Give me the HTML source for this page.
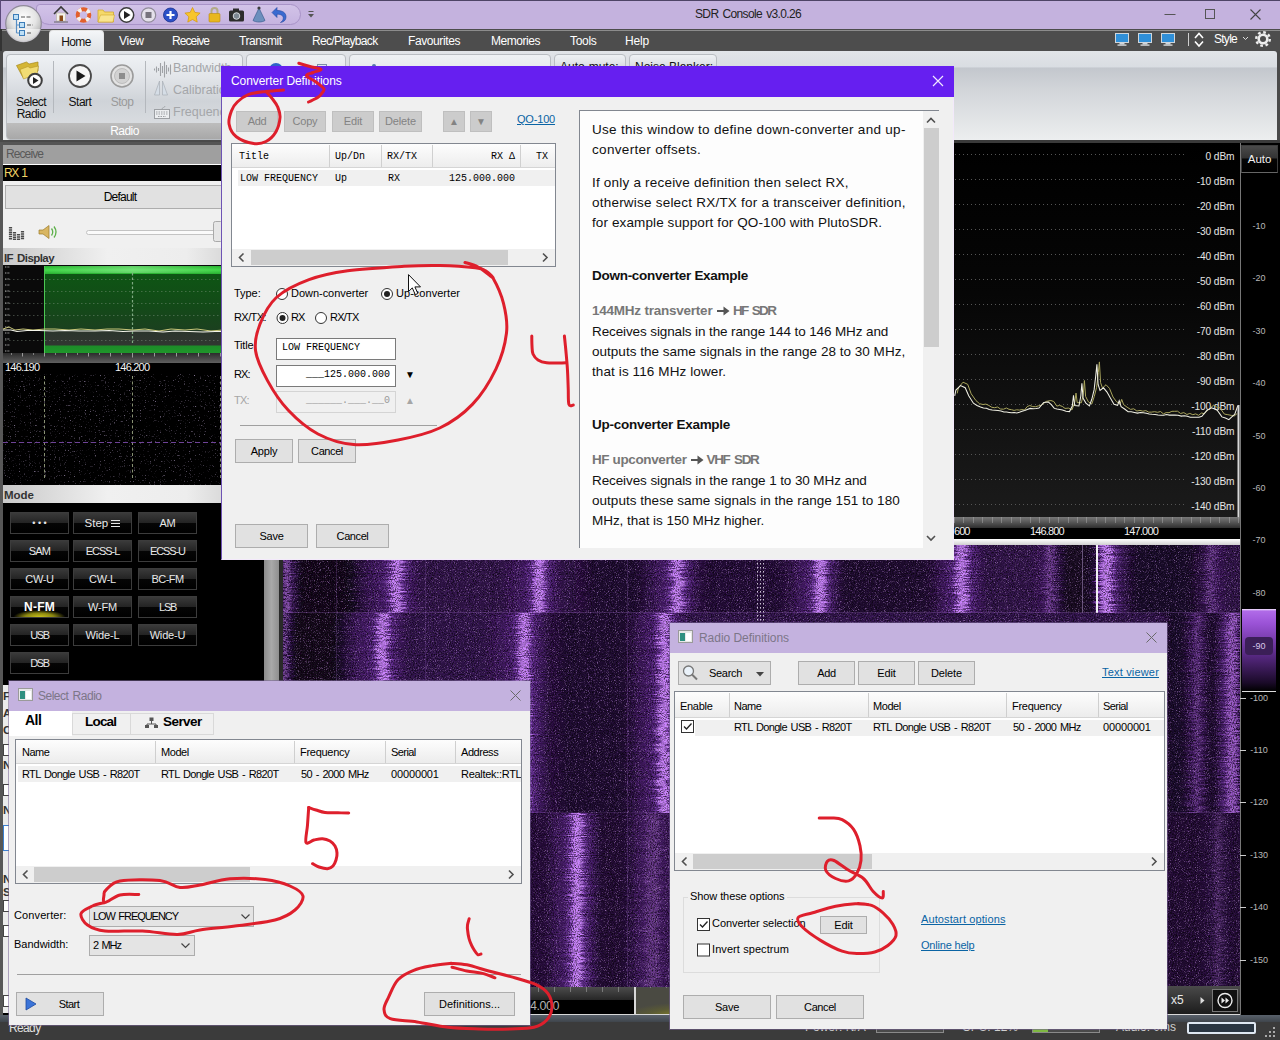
<!DOCTYPE html>
<html>
<head>
<meta charset="utf-8">
<title>SDR Console v3.0.26</title>
<style>
*{box-sizing:border-box;margin:0;padding:0}
html,body{width:1280px;height:1040px;overflow:hidden;background:#000}
body{font-family:"Liberation Sans",sans-serif;font-size:11px;color:#000;position:relative}
.abs{position:absolute}
#app{position:absolute;left:0;top:0;width:1280px;height:1040px;overflow:hidden;background:#4a4a4a}
/* ---------- title bar ---------- */
#titlebar{left:0;top:0;width:1280px;height:29px;background:#c4b2de}
#titlebar .ttl{left:648px;top:7px;width:200px;text-align:center;font-size:12.5px;color:#222}
#menubar{left:0;top:29px;width:1280px;height:22px;background:#4d4d4d}
.menu{position:absolute;top:6px;font-size:12px;color:#fff;letter-spacing:.1px}
#hometab{left:49px;top:30px;width:55px;height:21px;background:linear-gradient(#f4f6f8,#dfe3e7);border-radius:4px 4px 0 0;border:1px solid #e6e6e6;border-bottom:0}
#ribbon{left:3px;top:51px;width:1274px;height:89px;background:linear-gradient(#e1e4e8 0,#d9dde2 18%,#c3c7cd 19%,#d3d6da 45%,#eceeef 100%);border-radius:3px 3px 0 0}
.rgroup{position:absolute;top:3px;height:86px;border:1px solid #b9bdc2;border-radius:4px;background:linear-gradient(#eef1f4 0,#e3e6ea 25%,#cfd3d8 55%,#dfe2e5 100%);overflow:hidden}
.rglabel{position:absolute;left:0;right:0;bottom:0;height:16px;background:linear-gradient(#bdbdbd,#a8a8a8);color:#fff;font-size:12px;text-align:center;line-height:16px}
.rbtxt{position:absolute;font-size:12px;text-align:center;color:#111;line-height:13px}
/* ---------- left panel ---------- */
#left{left:0;top:142px;width:283px;height:878px;background:#000}
.phead{position:absolute;left:3px;height:17px;background:linear-gradient(90deg,#c9c9c9 0,#f0f0f0 40%,#ededed 70%,#c4c4c4 100%);color:#333;font-weight:bold;font-size:11.5px;line-height:17px;padding-left:1px}
.mbtn{position:absolute;width:59px;height:22px;border:1px solid #3c3c3c;background:linear-gradient(#3a3a3a 0,#242424 48%,#050505 52%,#000 100%);color:#e8e8e8;font-size:11.5px;text-align:center;line-height:20px}
/* ---------- dialogs ---------- */
.dlg{position:absolute;background:#f0f0f0}
.wbtn{position:absolute;border:1px solid #adadad;background:#e1e1e1;font-size:11.5px;text-align:center;color:#000}
.wbtn.dis{background:#cccccc;border-color:#bfbfbf;color:#838383}
.lst{position:absolute;background:#fff;border:1px solid #828790}
.lh{position:absolute;top:0;height:22px;border-right:1px solid #d0d0d0;font-size:11.5px;padding-left:5px;line-height:22px;background:linear-gradient(#fff,#f2f2f2)}
.lnk{position:absolute;color:#0a64a4;text-decoration:underline;font-size:11.5px}
.mono{font-family:"Liberation Mono",monospace}
.t{position:absolute;white-space:nowrap}
.hp{position:absolute;left:12px;white-space:nowrap;font-size:13.500px;line-height:20px;color:#111}
.hp.b{font-weight:bold}
.hp.g{font-weight:bold;color:#777}
</style>
</head>
<body>
<div id="app">

<!-- TITLE BAR -->
<div id="titlebar" class="abs">
  <div class="abs" style="left:0;top:0;width:1280px;height:1px;background:#4e4466"></div>
  <div class="abs" style="left:0;top:0;width:1px;height:30px;background:#5a4a78"></div>
  <!-- quick access toolbar pill -->
  <div class="abs" style="left:36px;top:4px;width:265px;height:21px;border:1px solid #a893c7;border-radius:4px 11px 11px 14px;background:linear-gradient(#d2c3e8,#c6b4e0)"></div>
  <div class="ttl abs" style="font-size:12px;letter-spacing:-0.642px;word-spacing:1.4px">SDR Console v3.0.26</div>
  <!-- window controls -->
  <svg class="abs" style="left:1150px;top:0" width="130" height="30" viewBox="0 0 130 30">
    <path d="M14.5 14.5h11" stroke="#555" stroke-width="1" fill="none"/>
    <rect x="55.5" y="9.5" width="9" height="9" stroke="#555" stroke-width="1" fill="none"/>
    <path d="M100.500 9.500l10 10M110.500 9.500l-10 10" stroke="#444" stroke-width="1.1" fill="none"/>
  </svg>
  <!-- QAT icons -->
  <svg class="abs" style="left:48px;top:3px" width="280" height="24" viewBox="0 0 280 24">
    <!-- house -->
    <path d="M6 11 L13 4 L20 11" stroke="#3a3a3a" stroke-width="1.6" fill="none"/>
    <rect x="8.500" y="10" width="9" height="8" fill="#f3f1ea" stroke="#b9b3a0" stroke-width=".6"/>
    <rect x="11.500" y="12.500" width="3.500" height="5.500" fill="#8b4a18"/>
    <path d="M6 19h14" stroke="#666" stroke-width="1"/>
    <!-- lifebuoy -->
    <circle cx="35.500" cy="12" r="5.800" fill="none" stroke="#e2602c" stroke-width="4"/>
    <circle cx="35.500" cy="12" r="5.800" fill="none" stroke="#f4f1ee" stroke-width="4" stroke-dasharray="3.500 5.610" stroke-dashoffset="-2.800"/>
    <!-- folder -->
    <path d="M50 7h5l1.500 2h9v10h-15.500z" fill="#f5d86a" stroke="#d2a92e" stroke-width=".8"/>
    <path d="M50 19l2.500 -7h14l-1.500 7z" fill="#f9e48f" stroke="#d2a92e" stroke-width=".6"/>
    <!-- play -->
    <circle cx="78.500" cy="12" r="7.200" fill="#fff" stroke="#3b3b3b" stroke-width="1.500"/>
    <path d="M76 8l6.500 4l-6.500 4z" fill="#222"/>
    <!-- stop -->
    <circle cx="100.500" cy="12" r="7.200" fill="#e4e0ea" stroke="#8f8a98" stroke-width="1.200"/>
    <rect x="97.500" y="9" width="6" height="6" fill="#77737d"/>
    <!-- blue plus -->
    <circle cx="122.500" cy="12" r="7" fill="#2b50c8" stroke="#1b2f8a" stroke-width=".8"/>
    <path d="M122.500 8v8M118.500 12h8" stroke="#fff" stroke-width="2.200"/>
    <!-- star -->
    <path d="M144.500 4.500l2.300 4.900 5.300 .7 -3.900 3.700 1 5.300 -4.700 -2.600 -4.700 2.600 1 -5.300 -3.900 -3.700 5.300 -.7z" fill="#f7c52c" stroke="#d79a13" stroke-width=".8"/>
    <!-- lock -->
    <path d="M163.500 11v-3a3 3 0 0 1 6 0v3" stroke="#b3ab86" stroke-width="2" fill="none"/>
    <rect x="161" y="10.500" width="11" height="8.500" rx="1" fill="#e8b720" stroke="#b88a10" stroke-width=".6"/>
    <!-- camera -->
    <rect x="181" y="7.500" width="15" height="11" rx="1.500" fill="#2c2c2c"/>
    <rect x="185" y="5.500" width="6" height="3" fill="#2c2c2c"/>
    <circle cx="188.500" cy="13" r="3.300" fill="#7d8892" stroke="#d5d8dc" stroke-width="1"/>
    <!-- cone -->
    <path d="M211 5l6 12.500c-3 2-9 2-12 0z" fill="#6c8fbd" stroke="#3d5f90" stroke-width=".7"/>
    <circle cx="211" cy="5" r="1.600" fill="#3d3d3d"/>
    <!-- undo -->
    <path d="M224 9.500 l5 -5 v3 c6 0 9 2.500 9 6.500 c0 3 -2 5 -5.500 5.500 c2 -1.500 2.800 -2.700 2.800 -4.500 c0 -2.500 -2.500 -3.800 -6.300 -3.800 v3.300z" fill="#3a6ad0" stroke="#2347a0" stroke-width=".6"/>
    <!-- dropdown -->
    <path d="M260.500 8.500h5" stroke="#555" stroke-width="1"/>
    <path d="M260 11h6l-3 3.500z" fill="#555"/>
  </svg>
</div>
  <svg class="abs" style="left:3px;top:3px;z-index:5" width="42" height="42" viewBox="0 0 42 42">
    <defs><radialGradient id="og" cx="50%" cy="35%" r="65%"><stop offset="0" stop-color="#ffffff"/><stop offset=".55" stop-color="#e4e4e4"/><stop offset="1" stop-color="#a9a9a9"/></radialGradient></defs>
    <circle cx="20.500" cy="20.500" r="17.800" fill="url(#og)" stroke="#8f8a99" stroke-width="1.200"/>
    <path d="M3.500 26 a17.500 17.500 0 0 0 34 0z" fill="#fff" opacity=".55"/>
    <path d="M13.500 14v16M13.500 22h6M13.500 30h6" stroke="#5a8fc4" stroke-width="1.200" fill="none"/>
    <rect x="10.500" y="11.500" width="5" height="5" fill="#bfe0f6" stroke="#3d7db8"/>
    <rect x="16.500" y="19.500" width="5" height="5" fill="#bfe0f6" stroke="#3d7db8"/>
    <rect x="16.500" y="27.500" width="5" height="5" fill="#bfe0f6" stroke="#3d7db8"/>
    <path d="M18 14h10M24 22h6M24 30h4" stroke="#555" stroke-width="1" stroke-dasharray="4 1.500"/>
  </svg>
<div id="menubar" class="abs">
  <div class="abs" style="left:0;top:1px;width:1280px;height:1px;background:#8c8c8c"></div>
  <div class="abs" style="left:0;top:0;width:2px;height:22px;background:#333"></div>
</div>
<div id="hometab" class="abs"><div class="abs" style="left:0;width:52px;top:4px;text-align:center;font-size:12px;color:#111;letter-spacing:-0.677px">Home</div></div>
<div class="menu" style="left:119px;top:34px;font-size:12px;letter-spacing:-0.273px">View</div>
<div class="menu" style="left:172px;top:34px;font-size:12px;letter-spacing:-0.908px">Receive</div>
<div class="menu" style="left:239px;top:34px;font-size:12px;letter-spacing:-0.466px">Transmit</div>
<div class="menu" style="left:312px;top:34px;font-size:12px;letter-spacing:-0.655px">Rec/Playback</div>
<div class="menu" style="left:408px;top:34px;font-size:12px;letter-spacing:-0.402px">Favourites</div>
<div class="menu" style="left:491px;top:34px;font-size:12px;letter-spacing:-0.459px">Memories</div>
<div class="menu" style="left:570px;top:34px;font-size:12px;letter-spacing:-0.303px">Tools</div>
<div class="menu" style="left:625px;top:34px;font-size:12px;letter-spacing:-0.170px">Help</div>
<div class="menu" style="left:1214px;top:32px;font-size:12px;letter-spacing:-0.736px">Style</div>
<svg class="abs" style="left:1110px;top:29px" width="170" height="22" viewBox="0 0 170 22">
  <g id="mon"><rect x="5.500" y="4.500" width="13" height="9" fill="#2f8fd8" stroke="#cfd6dc" stroke-width="1"/><rect x="9.500" y="14" width="5" height="1.500" fill="#cfd6dc"/><rect x="7.500" y="15.500" width="9" height="1.200" fill="#e6e9ec"/></g>
  <use href="#mon" x="23"/><use href="#mon" x="46"/>
  <path d="M78.500 4v13" stroke="#cfcfcf" stroke-width="1"/>
  <path d="M85 9l4-4.500 4 4.500M85 12.500l4 4.500 4-4.500" stroke="#fff" stroke-width="1.600" fill="none"/>
  <path d="M133 8l2.500 2.500 2.500-2.500" stroke="#ddd" stroke-width="1" fill="none"/>
  <circle cx="153" cy="10" r="4.300" fill="none" stroke="#eee" stroke-width="2.600"/>
  <circle cx="153" cy="10" r="6.800" fill="none" stroke="#eee" stroke-width="2.400" stroke-dasharray="2.700 2.640"/>
</svg>

<!-- RIBBON -->
<div id="ribbon" class="abs">
  <div class="rgroup" style="left:3px;width:237px">
    <div class="rglabel" style="font-size:12px;letter-spacing:-0.531px">Radio</div>
    <div class="abs" style="left:46px;top:6px;width:1px;height:52px;background:#b4b8bd"></div>
    <div class="abs" style="left:138px;top:6px;width:1px;height:52px;background:#b4b8bd"></div>
    <div class="rbtxt" style="left:1px;top:40.500px;width:46px;letter-spacing:-.55px;line-height:12.500px">Select<br>Radio</div>
    <div class="rbtxt" style="left:52px;top:40.500px;width:42px;font-size:12px;letter-spacing:-0.468px">Start</div>
    <div class="rbtxt" style="left:94px;top:40.500px;width:42px;color:#9a9a9a;font-size:12px;letter-spacing:-0.496px">Stop</div>
    <div class="rbtxt" style="left:166px;top:6.500px;color:#a4a6a9;font-size:12.500px">Bandwidth</div>
    <div class="rbtxt" style="left:166px;top:28.500px;color:#a4a6a9;font-size:12.500px">Calibration</div>
    <div class="rbtxt" style="left:166px;top:50.500px;color:#a4a6a9;font-size:12.500px">Frequency</div>
    <svg class="abs" style="left:0;top:1.500px" width="237" height="68" viewBox="0 0 237 68">
      <!-- select radio: folders + play -->
      <path d="M9.500 8.500l10-3.500 2.500 2 9-2v9l-15 6.500z" fill="#d4b534" stroke="#a88a1c" stroke-width=".7"/>
      <path d="M13 12.500l8-3 2 1.500 8.500-2-1.500 8-13.500 5z" fill="#f1dc74" stroke="#b4952a" stroke-width=".6"/>
      <circle cx="28" cy="23.500" r="6.800" fill="#fdfdfd" stroke="#3f3f3f" stroke-width="2"/>
      <path d="M26 20l5.500 3.500-5.500 3.500z" fill="#222"/>
      <!-- start -->
      <circle cx="73" cy="19" r="11" fill="#f6f6f6" stroke="#4a4a4a" stroke-width="1.800"/>
      <path d="M69.500 13.500l9 5.500-9 5.500z" fill="#1a1a1a"/>
      <!-- stop -->
      <circle cx="115" cy="19" r="11" fill="#e3e3e3" stroke="#9b9b9b" stroke-width="1.600"/>
      <circle cx="115" cy="19" r="7.500" fill="#d2d2d2" stroke="#b5b5b5" stroke-width=".8"/>
      <rect x="112" y="16" width="6" height="6" fill="#8d8d8d"/>
      <!-- bandwidth icon -->
      <path d="M147.500 11.500v2M149.500 9.500v6M151.500 11v3M153.500 6v13M155.500 9v7M157.500 4.500v16M159.500 8v9M161.500 10.500v4M163.500 7.500v10" stroke="#9fa2a6" stroke-width="1.100"/>
      <!-- calibration icon -->
      <path d="M152.500 24l-5 14h5zM155.500 24l5 14h-5z" fill="#d5dde6" stroke="#a9afb6" stroke-width=".7"/>
      <!-- keyboard icon -->
      <rect x="147.500" y="52.500" width="15" height="9" fill="#eceef0" stroke="#9c9fa3" stroke-width="1"/>
      <path d="M149 55h12M149 57h12M151 59.500h8" stroke="#9c9fa3" stroke-width="1" stroke-dasharray="1.500 1"/>
      <path d="M155 52c0-2 3-1 3-3" stroke="#9c9fa3" stroke-width=".8" fill="none"/>
    </svg>
  </div>
  <div class="rgroup" style="left:243px;width:100px"><div class="rglabel"></div><svg class="abs" style="left:0;top:0" width="100" height="30"><circle cx="29" cy="15" r="7" fill="#2f62c8"/><rect x="70.500" y="9.500" width="9" height="8" fill="#dfe6ee" stroke="#7d8fa8"/></svg></div>
  <div class="rgroup" style="left:346px;width:202px"><div class="rglabel"></div><svg class="abs" style="left:0;top:0" width="202" height="30"><circle cx="24" cy="11" r="2" fill="#5577aa"/></svg></div>
  <div class="rgroup" style="left:551px;width:72px;height:30px"><div class="rbtxt" style="left:5px;top:6px;font-size:12px">Auto-mute:</div></div>
  <div class="rgroup" style="left:626px;width:88px;height:30px"><div class="rbtxt" style="left:5px;top:6px;font-size:12px">Noise Blanker:</div></div>
</div>
<div id="left" class="abs">
  <div class="abs" style="left:0;top:0;width:283px;height:3px;background:#555"></div>
  <div class="abs" style="left:0;top:0;width:3px;height:878px;background:#575757"></div>
  <!-- Receive header -->
  <div class="abs" style="left:3px;top:3px;width:262px;height:19px;background:#9f9f9f;color:#595959;font-size:12px;line-height:19px;padding-left:3px;letter-spacing:-0.908px">Receive</div>
  <div class="abs" style="left:3px;top:22px;width:262px;height:1px;background:#fff"></div>
  <div class="abs" style="left:3px;top:23px;width:262px;height:16px;background:#000;color:#f2d467;font-size:12px;line-height:16px;padding-left:1px;letter-spacing:-1.394px;word-spacing:1.4px">RX 1</div>
  <div class="abs" style="left:3px;top:39px;width:262px;height:67px;background:#f0f0f0"></div>
  <div class="wbtn" style="left:5px;top:43px;width:230px;height:24px;font-size:12px;line-height:22px;letter-spacing:-0.760px">Default</div>
  <svg class="abs" style="left:3px;top:76px" width="230" height="28" viewBox="0 0 230 28">
    <path d="M7.500 9v13M11.500 14v8M15.500 16v6M19.500 13v9" stroke="#4a4a4a" stroke-width="3.200" stroke-dasharray="1.500 .7"/>
    <path d="M36 12h4l6-4.500v13l-6-4.500h-4z" fill="#d9b662" stroke="#9b7b2c" stroke-width=".7"/>
    <path d="M48.500 10.500q2.500 3.500 0 7M51 8.500q4 5.500 0 11" stroke="#5db04a" stroke-width="1.300" fill="none"/>
    <rect x="83.500" y="12.500" width="132" height="4" rx="2" fill="#fafafa" stroke="#c3c3c3" stroke-width="1"/>
    <rect x="210.500" y="3.500" width="9" height="20" rx="2" fill="#e6e6e6" stroke="#a9a9a9" stroke-width="1"/>
  </svg>
  <!-- IF display -->
  <div class="phead" style="top:106px;width:262px;line-height:20px;font-size:11.5px;letter-spacing:-0.573px;word-spacing:1.4px">IF Display</div>
  <div class="abs" style="left:3px;top:123px;width:262px;height:88px;background:#0a0a0a"></div>
  <div class="abs" style="left:44px;top:124px;width:177px;height:87px;background:linear-gradient(#27b02f 0,#43d84a 4px,#2cb534 7.500px,#0e5514 8px,#134a18 40px,#1b401f 64px,#2b352c 65px,#313631 79px,#1d8c28 80px,#1f962b 87px);border-left:1px solid #4cc853"></div>
  <div class="abs" style="left:44px;top:124px;width:177px;height:87px;background:linear-gradient(90deg,rgba(255,255,255,0) 0,rgba(200,255,200,.35) 50%,rgba(255,255,255,0) 100%);height:7px"></div>
  <svg class="abs" style="left:3px;top:123px" width="262" height="100" viewBox="0 0 262 100">
    <g stroke="#8fa08f" stroke-width=".8" stroke-dasharray="1.500 2.500" opacity=".5">
      <path d="M2 14.500h216M2 26.500h216M2 38.500h216M2 50.500h216M2 75.500h216"/>
    </g>
    <path d="M129.500 8v72" stroke="#7fa982" stroke-width="1.200" stroke-dasharray="2.500 2"/>
    <g stroke="#bbb" stroke-width=".9"><path d="M2 2h5M2 8h5M2 14h5M2 20h5M2 26h5M2 32h5M2 38h5M2 44h5M2 50h5M2 56h5M2 62h5M2 68h5M2 74h5M2 80h5M2 86h5" stroke-dasharray="1 .6"/></g>
    <path d="M0 64 l6 -2 6 3 8 -1 10 1 12 -1 10 0 14 1 12 -1 14 1 12 -1 12 0 14 1 12 -1 14 2 12 -2 14 1 12 -1 14 2 12 -1 6 0" stroke="#c9c77a" stroke-width="1" fill="none"/>
    <path d="M0 65 l8 0 6 1.500 10 -1 12 0 14 .5 12 -.5 14 .5 16 0 14 -.5 14 1 12 -.5 14 0 14 1 12 -1 14 .5 14 .5 12 -.5 10 0" stroke="#f4f4ea" stroke-width="1.100" fill="none"/>
  </svg>
  <!-- tick bar -->
  <div class="abs" style="left:3px;top:211px;width:262px;height:10px;background:linear-gradient(#2c2c2c,#606060)"></div>
  <svg class="abs" style="left:3px;top:211px" width="220" height="10" viewBox="0 0 220 10">
    <path d="M19.500 0v3.500M41.500 0v3.500M63.500 0v3.500M85.500 0v3.500M107.500 0v3.500M129.500 0v4.500M151.500 0v3.500M173.500 0v3.500M195.500 0v3.500M217.500 0v3.500" stroke="#9a9a9a" stroke-width="1"/>
    <path d="M8.500 0v2M30.500 0v2M52.500 0v2M74.500 0v2M96.500 0v2M118.500 0v2M140.500 0v2M162.500 0v2M184.500 0v2M206.500 0v2" stroke="#808080" stroke-width="1"/>
  </svg>
  <div class="t" style="left:5px;top:219px;color:#f4f4f4;font-size:11px;letter-spacing:-0.794px">146.190</div>
  <div class="t" style="left:115px;top:219px;color:#f4f4f4;font-size:11px;letter-spacing:-0.794px">146.200</div>
  <svg class="abs" style="left:3px;top:232px" width="262" height="111"><filter id="nz3" x="0" y="0" width="100%" height="100%"><feTurbulence type="fractalNoise" baseFrequency="0.800" numOctaves="1" seed="7"/><feColorMatrix type="matrix" values="0 0 0 0 0.620  0 0 0 0 0.480  0 0 0 0 0.780  0 4 0 0 -2.550"/></filter><rect width="262" height="122" filter="url(#nz3)" opacity=".8"/></svg>
  <svg class="abs" style="left:3px;top:232px" width="262" height="112" viewBox="0 0 262 112">
    <path d="M41.500 2v104M129.500 2v104M217.500 2v104" stroke="#a9b58e" stroke-width="1" stroke-dasharray="3 2.500" opacity=".8"/>
    <path d="M0 68.500h218" stroke="#7a4aa8" stroke-width="1" stroke-dasharray="5 3" opacity=".9"/>
  </svg>
  <!-- Mode -->
  <div class="phead" style="top:343px;width:262px;height:18px;line-height:20px;font-size:11.5px;letter-spacing:-0.007px">Mode</div>
  <div class="mbtn" style="left:10px;top:370px;font-size:9px;letter-spacing:0">• • •</div>
<div class="mbtn" style="left:73px;top:370px">Step <svg width="9" height="9" viewBox="0 0 9 9" style="vertical-align:-0.500px"><path d="M0 1.500h9M0 4.500h9M0 7.500h9" stroke="#e8e8e8" stroke-width="1.200"/></svg></div>
<div class="mbtn" style="left:138px;top:370px;font-size:11px;letter-spacing:-0.251px">AM</div>
<div class="mbtn" style="left:10px;top:398px;font-size:11px;letter-spacing:-0.780px">SAM</div>
<div class="mbtn" style="left:73px;top:398px;font-size:11px;letter-spacing:-1.040px">ECSS-L</div>
<div class="mbtn" style="left:138px;top:398px;font-size:11px;letter-spacing:-1.127px">ECSS-U</div>
<div class="mbtn" style="left:10px;top:426px;font-size:11px;letter-spacing:-0.359px">CW-U</div>
<div class="mbtn" style="left:73px;top:426px;font-size:11px;letter-spacing:-0.277px">CW-L</div>
<div class="mbtn" style="left:138px;top:426px;font-size:11px;letter-spacing:-0.566px">BC-FM</div>
<div class="mbtn" style="left:10px;top:454px;font-weight:bold;color:#fff;font-size:12px;background:radial-gradient(ellipse 26px 7px at 50% 100%,#c9c21a 0,#8a8610 55%,rgba(0,0,0,0) 100%),linear-gradient(#3a3a3a 0,#242424 48%,#050505 52%,#000 100%);letter-spacing:0.203px">N-FM</div>
<div class="mbtn" style="left:73px;top:454px;font-size:11px;letter-spacing:-0.133px">W-FM</div>
<div class="mbtn" style="left:138px;top:454px;font-size:11px;letter-spacing:-1.331px">LSB</div>
<div class="mbtn" style="left:10px;top:482px;font-size:11px;letter-spacing:-1.373px">USB</div>
<div class="mbtn" style="left:73px;top:482px;font-size:11px;letter-spacing:-0.174px">Wide-L</div>
<div class="mbtn" style="left:138px;top:482px;font-size:11px;letter-spacing:-0.161px">Wide-U</div>
<div class="mbtn" style="left:10px;top:510px;font-size:11px;letter-spacing:-1.373px">DSB</div>

  <!-- splitter -->
  <div class="abs" style="left:264px;top:3px;width:15px;height:875px;background:linear-gradient(90deg,#8b8b8b,#a9a9a9 50%,#8f8f8f)"></div>
  <div class="abs" style="left:279px;top:3px;width:4px;height:875px;background:#2a2a2a"></div>
  <!-- hidden strip behind select radio -->
  <div class="abs" style="left:3px;top:543px;width:8px;height:328px;background:#ebebeb"></div>
  <div class="t" style="left:3px;top:548px;font-size:11.500px;font-weight:bold;color:#333;width:6px;overflow:hidden">F</div>
  <div class="t" style="left:3px;top:565px;font-size:11.500px;font-weight:bold;color:#333;width:6px;overflow:hidden">A</div>
  <div class="t" style="left:3px;top:582px;font-size:11.500px;font-weight:bold;color:#333;width:6px;overflow:hidden">C</div>
  <div class="t" style="left:3px;top:617px;font-size:11.500px;font-weight:bold;color:#333;width:6px;overflow:hidden">N</div>
  <div class="t" style="left:3px;top:662px;font-size:11.500px;font-weight:bold;color:#333;width:6px;overflow:hidden">N</div>
  <div class="t" style="left:3px;top:731px;font-size:11.500px;font-weight:bold;color:#333;width:6px;overflow:hidden">N</div>
  <div class="t" style="left:3px;top:744px;font-size:11.500px;font-weight:bold;color:#333;width:6px;overflow:hidden">S</div>
  <div class="abs" style="left:3px;top:602px;width:6px;height:12px;border:1px solid #444;border-right:0;background:#fff"></div>
  <div class="abs" style="left:3px;top:642px;width:6px;height:12px;border:1px solid #444;border-right:0;background:#fff"></div>
  <div class="abs" style="left:3px;top:758px;width:6px;height:12px;border:1px solid #444;border-right:0;background:#fff"></div>
  <div class="abs" style="left:3px;top:783px;width:6px;height:12px;border:1px solid #444;border-right:0;background:#fff"></div>
  <div class="abs" style="left:3px;top:853px;width:6px;height:12px;border:1px solid #444;border-right:0;background:#fff"></div>
  <div class="abs" style="left:3px;top:683px;width:6px;height:26px;border:1px solid #3c7fd0;border-right:0;background:#fff"></div>
  
</div>

<!-- SPECTRUM -->
<div class="abs" style="left:283px;top:140px;width:997px;height:4px;background:#3a3a3a"></div>
<div class="abs" style="left:283px;top:143px;width:957px;height:375px;background:linear-gradient(#000 0,#060606 40%,#1b1b1b 100%)"></div>
<div class="t" style="right:45.500px;top:150.6px;color:#e4e4e4;font-size:10.200px;letter-spacing:-.1px">0 dBm</div>
<div class="abs" style="left:283px;top:154px;width:903px;height:1px;background:repeating-linear-gradient(90deg,#555 0,#555 1px,transparent 1px,transparent 4px)"></div>
<div class="t" style="right:45.500px;top:175.6px;color:#e4e4e4;font-size:10.200px;letter-spacing:-.1px">-10 dBm</div>
<div class="abs" style="left:283px;top:179px;width:903px;height:1px;background:repeating-linear-gradient(90deg,#555 0,#555 1px,transparent 1px,transparent 4px)"></div>
<div class="t" style="right:45.500px;top:200.6px;color:#e4e4e4;font-size:10.200px;letter-spacing:-.1px">-20 dBm</div>
<div class="abs" style="left:283px;top:204px;width:903px;height:1px;background:repeating-linear-gradient(90deg,#555 0,#555 1px,transparent 1px,transparent 4px)"></div>
<div class="t" style="right:45.500px;top:225.6px;color:#e4e4e4;font-size:10.200px;letter-spacing:-.1px">-30 dBm</div>
<div class="abs" style="left:283px;top:229px;width:903px;height:1px;background:repeating-linear-gradient(90deg,#555 0,#555 1px,transparent 1px,transparent 4px)"></div>
<div class="t" style="right:45.500px;top:250.6px;color:#e4e4e4;font-size:10.200px;letter-spacing:-.1px">-40 dBm</div>
<div class="abs" style="left:283px;top:254px;width:903px;height:1px;background:repeating-linear-gradient(90deg,#555 0,#555 1px,transparent 1px,transparent 4px)"></div>
<div class="t" style="right:45.500px;top:275.6px;color:#e4e4e4;font-size:10.200px;letter-spacing:-.1px">-50 dBm</div>
<div class="abs" style="left:283px;top:279px;width:903px;height:1px;background:repeating-linear-gradient(90deg,#555 0,#555 1px,transparent 1px,transparent 4px)"></div>
<div class="t" style="right:45.500px;top:300.6px;color:#e4e4e4;font-size:10.200px;letter-spacing:-.1px">-60 dBm</div>
<div class="abs" style="left:283px;top:304px;width:903px;height:1px;background:repeating-linear-gradient(90deg,#555 0,#555 1px,transparent 1px,transparent 4px)"></div>
<div class="t" style="right:45.500px;top:325.6px;color:#e4e4e4;font-size:10.200px;letter-spacing:-.1px">-70 dBm</div>
<div class="abs" style="left:283px;top:329px;width:903px;height:1px;background:repeating-linear-gradient(90deg,#555 0,#555 1px,transparent 1px,transparent 4px)"></div>
<div class="t" style="right:45.500px;top:350.6px;color:#e4e4e4;font-size:10.200px;letter-spacing:-.1px">-80 dBm</div>
<div class="abs" style="left:283px;top:354px;width:903px;height:1px;background:repeating-linear-gradient(90deg,#555 0,#555 1px,transparent 1px,transparent 4px)"></div>
<div class="t" style="right:45.500px;top:375.6px;color:#e4e4e4;font-size:10.200px;letter-spacing:-.1px">-90 dBm</div>
<div class="abs" style="left:283px;top:379px;width:903px;height:1px;background:repeating-linear-gradient(90deg,#555 0,#555 1px,transparent 1px,transparent 4px)"></div>
<div class="t" style="right:45.500px;top:400.6px;color:#e4e4e4;font-size:10.200px;letter-spacing:-.1px">-100 dBm</div>
<div class="abs" style="left:283px;top:404px;width:903px;height:1px;background:repeating-linear-gradient(90deg,#555 0,#555 1px,transparent 1px,transparent 4px)"></div>
<div class="t" style="right:45.500px;top:425.6px;color:#e4e4e4;font-size:10.200px;letter-spacing:-.1px">-110 dBm</div>
<div class="abs" style="left:283px;top:429px;width:903px;height:1px;background:repeating-linear-gradient(90deg,#555 0,#555 1px,transparent 1px,transparent 4px)"></div>
<div class="t" style="right:45.500px;top:450.6px;color:#e4e4e4;font-size:10.200px;letter-spacing:-.1px">-120 dBm</div>
<div class="abs" style="left:283px;top:454px;width:903px;height:1px;background:repeating-linear-gradient(90deg,#555 0,#555 1px,transparent 1px,transparent 4px)"></div>
<div class="t" style="right:45.500px;top:475.6px;color:#e4e4e4;font-size:10.200px;letter-spacing:-.1px">-130 dBm</div>
<div class="abs" style="left:283px;top:479px;width:903px;height:1px;background:repeating-linear-gradient(90deg,#555 0,#555 1px,transparent 1px,transparent 4px)"></div>
<div class="t" style="right:45.500px;top:500.6px;color:#e4e4e4;font-size:10.200px;letter-spacing:-.1px">-140 dBm</div>
<div class="abs" style="left:283px;top:504px;width:903px;height:1px;background:repeating-linear-gradient(90deg,#555 0,#555 1px,transparent 1px,transparent 4px)"></div>

<svg class="abs" style="left:940px;top:340px" width="300" height="180" viewBox="940 340 300 180">
  <path d="M957.2 393.4 L958.4 387.8 L963.0 382.2 L967.7 384.3 L971.2 393.8 L975.9 400.5 L979.5 403.7 L983.0 404.5 L985.9 404.1 L988.9 405.5 L991.8 407.3 L994.7 407.7 L997.6 407.0 L1000.5 409.0 L1003.5 409.2 L1006.4 408.0 L1009.0 409.3 L1011.6 409.7 L1014.1 410.4 L1016.7 409.8 L1019.3 410.1 L1021.9 409.5 L1024.5 410.0 L1027.2 406.6 L1029.8 405.5 L1032.7 406.6 L1035.7 406.7 L1038.6 405.8 L1041.5 405.2 L1046.2 401.4 L1050.9 400.5 L1053.8 401.5 L1056.8 406.1 L1059.5 405.4 L1062.3 406.4 L1065.0 408.4 L1068.5 408.1 L1072.0 409.9 L1074.8 402.1 L1076.0 393.1 L1077.2 402.6 L1081.4 402.8 L1083.3 394.0 L1084.4 380.5 L1085.6 396.4 L1088.4 401.9 L1091.9 403.8 L1094.3 396.3 L1096.6 387.4 L1098.3 372.6 L1099.4 361.9 L1100.6 382.7 L1102.5 388.1 L1106.0 384.7 L1109.5 388.4 L1113.0 397.0 L1116.5 401.7 L1120.1 403.8 L1121.7 399.4 L1123.6 404.6 L1127.1 407.2 L1130.6 409.4 L1133.7 408.8 L1136.9 411.0 L1140.0 410.4 L1142.9 411.2 L1145.8 410.6 L1148.8 412.2 L1151.7 412.1 L1154.6 411.7 L1157.6 412.3 L1160.5 411.5 L1163.4 413.9 L1166.2 412.6 L1169.0 412.7 L1171.9 411.3 L1174.7 411.3 L1177.5 411.2 L1180.6 413.5 L1183.8 412.6 L1186.9 414.5 L1189.8 413.4 L1192.8 414.7 L1195.7 413.9 L1198.6 415.3 L1201.5 413.0 L1204.4 413.7 L1209.1 409.0 L1213.8 405.0 L1216.8 407.1 L1219.7 407.6 L1224.4 414.1 L1227.9 414.7 L1231.4 415.4 L1234.3 415.9 L1237.2 413.5" stroke="#a9a55c" stroke-width="1" fill="none"/>
  <path d="M954.7 395.9 L955.9 390.0 L960.5 385.6 L965.2 387.7 L968.7 395.8 L973.4 403.2 L977.0 405.5 L980.5 407.1 L983.4 407.9 L986.4 408.3 L989.3 409.5 L992.2 410.1 L995.1 410.3 L998.0 410.5 L1001.0 410.9 L1003.9 411.9 L1006.5 412.1 L1009.1 412.4 L1011.6 412.8 L1014.2 412.5 L1016.8 412.9 L1019.4 412.2 L1022.0 411.3 L1024.7 410.5 L1027.3 409.5 L1030.2 408.4 L1033.2 408.7 L1036.1 408.4 L1039.0 408.0 L1043.7 402.5 L1048.4 402.1 L1051.3 404.6 L1054.3 408.4 L1057.0 409.1 L1059.8 409.6 L1062.5 410.1 L1066.0 411.3 L1069.5 411.6 L1072.3 406.0 L1073.5 395.3 L1074.7 405.6 L1078.9 406.0 L1080.8 396.3 L1081.9 383.3 L1083.1 398.3 L1085.9 403.1 L1089.4 405.9 L1091.8 399.3 L1094.1 389.9 L1095.8 375.3 L1096.9 364.4 L1098.1 384.5 L1100.0 390.4 L1103.5 387.8 L1107.0 392.1 L1110.5 398.3 L1114.0 404.3 L1117.6 405.3 L1119.2 400.6 L1121.1 406.6 L1124.6 409.0 L1128.1 411.7 L1131.2 411.7 L1134.4 412.4 L1137.5 413.1 L1140.4 412.6 L1143.3 412.8 L1146.3 413.3 L1149.2 414.1 L1152.1 414.3 L1155.1 414.4 L1158.0 414.9 L1160.9 415.2 L1163.7 415.3 L1166.5 414.6 L1169.4 415.1 L1172.2 415.1 L1175.0 415.0 L1178.1 415.3 L1181.3 416.1 L1184.4 415.7 L1187.3 416.3 L1190.2 417.2 L1193.2 417.3 L1196.1 417.2 L1199.0 417.2 L1201.9 416.3 L1206.6 410.6 L1211.3 407.8 L1214.2 408.8 L1217.2 410.2 L1221.9 416.9 L1225.4 418.1 L1228.9 419.7 L1231.8 416.9 L1234.7 414.5 L1237.8 405.6" stroke="#f0f0e4" stroke-width="1.050" fill="none"/>
  <path d="M1238.500 405v113" stroke="#d8d8d8" stroke-width="2"/>
</svg>
<!-- freq tick bar -->
<div class="abs" style="left:283px;top:517px;width:957px;height:11px;background:linear-gradient(#7a7a7a,#2e2e2e)"></div>
<div class="abs" style="left:283px;top:517px;width:957px;height:6px;background:repeating-linear-gradient(90deg,transparent 0,transparent 8px,#bbb 8px,#bbb 9px,transparent 9px,transparent 9.470px);opacity:.4"></div>
<div class="abs" style="left:283px;top:528px;width:957px;height:11px;background:#000"></div>
<div class="t" style="left:954px;top:525px;color:#f0f0f0;font-size:11px;letter-spacing:-0.984px">600</div>
<div class="t" style="left:1030px;top:525px;color:#f0f0f0;font-size:11px;letter-spacing:-0.851px">146.800</div>
<div class="t" style="left:1124px;top:525px;color:#f0f0f0;font-size:11px;letter-spacing:-0.823px">147.000</div>
<div class="abs" style="left:283px;top:539px;width:957px;height:6px;background:linear-gradient(#fff,#d0d0d0)"></div>

<!-- WATERFALL -->
<div class="abs" id="wf" style="left:283px;top:545px;width:957px;height:443px;background:#2a1040;overflow:hidden">
  <div class="abs" style="left:0;top:0px;width:957px;height:68px;filter:url(#jag);background:linear-gradient(90deg,rgba(205,135,255,0) 106.8px,rgba(205,135,255,0.85) 112.2px,rgba(205,135,255,0.85) 115.8px,rgba(205,135,255,0) 121.2px),linear-gradient(90deg,rgba(205,135,255,0) 248.8px,rgba(205,135,255,0.85) 254.2px,rgba(205,135,255,0.85) 257.8px,rgba(205,135,255,0) 263.2px),linear-gradient(90deg,rgba(205,135,255,0) 386.8px,rgba(205,135,255,0.85) 392.2px,rgba(205,135,255,0.85) 395.8px,rgba(205,135,255,0) 401.2px),linear-gradient(90deg,rgba(205,135,255,0) 529.8px,rgba(205,135,255,0.85) 535.2px,rgba(205,135,255,0.85) 538.8px,rgba(205,135,255,0) 544.2px),linear-gradient(90deg,rgba(205,135,255,0) 671.8px,rgba(205,135,255,0.85) 677.2px,rgba(205,135,255,0.85) 680.8px,rgba(205,135,255,0) 686.2px),linear-gradient(90deg,rgba(205,135,255,0) 815.8px,rgba(205,135,255,0.85) 821.2px,rgba(205,135,255,0.85) 824.8px,rgba(205,135,255,0) 830.2px),linear-gradient(90deg,rgba(110,45,170,0) -6px,rgba(128,58,192,0.17) -5px,rgba(150,75,215,0.34) -0px,rgba(196,118,250,0.55) 2.2px,rgba(200,124,252,0.55) 5.8px,rgba(150,75,215,0.34) 8px,rgba(128,58,192,0.17) 13px,rgba(110,45,170,0) 18px),linear-gradient(90deg,rgba(110,45,170,0) 72px,rgba(128,58,192,0.30) 101px,rgba(150,75,215,0.62) 108px,rgba(196,118,250,1.00) 111.5px,rgba(200,124,252,1.00) 116.5px,rgba(150,75,215,0.62) 120px,rgba(128,58,192,0.30) 127px,rgba(110,45,170,0) 138px),linear-gradient(90deg,rgba(110,45,170,0) 218px,rgba(128,58,192,0.30) 243px,rgba(150,75,215,0.62) 250px,rgba(196,118,250,1.00) 253.6px,rgba(200,124,252,1.00) 258.4px,rgba(150,75,215,0.62) 262px,rgba(128,58,192,0.30) 269px,rgba(110,45,170,0) 280px),linear-gradient(90deg,rgba(110,45,170,0) 356px,rgba(128,58,192,0.30) 381px,rgba(150,75,215,0.62) 388px,rgba(196,118,250,1.00) 391.6px,rgba(200,124,252,1.00) 396.4px,rgba(150,75,215,0.62) 400px,rgba(128,58,192,0.30) 407px,rgba(110,45,170,0) 418px),linear-gradient(90deg,rgba(110,45,170,0) 499px,rgba(128,58,192,0.30) 524px,rgba(150,75,215,0.62) 531px,rgba(196,118,250,1.00) 534.5px,rgba(200,124,252,1.00) 539.5px,rgba(150,75,215,0.62) 543px,rgba(128,58,192,0.30) 550px,rgba(110,45,170,0) 561px),linear-gradient(90deg,rgba(110,45,170,0) 647px,rgba(128,58,192,0.30) 666px,rgba(150,75,215,0.62) 673px,rgba(196,118,250,1.00) 676.5px,rgba(200,124,252,1.00) 681.5px,rgba(150,75,215,0.62) 685px,rgba(128,58,192,0.30) 692px,rgba(110,45,170,0) 703px),linear-gradient(90deg,rgba(110,45,170,0) 745px,rgba(128,58,192,0.12) 758px,rgba(150,75,215,0.25) 762px,rgba(196,118,250,0.40) 765.2px,rgba(200,124,252,0.40) 768.8px,rgba(150,75,215,0.25) 772px,rgba(128,58,192,0.12) 776px,rgba(110,45,170,0) 783px),linear-gradient(90deg,rgba(110,45,170,0) 813px,rgba(128,58,192,0.30) 809px,rgba(150,75,215,0.62) 816px,rgba(196,118,250,1.00) 820.2px,rgba(200,124,252,1.00) 825.8px,rgba(150,75,215,0.62) 830px,rgba(128,58,192,0.30) 837px,rgba(110,45,170,0) 853px),linear-gradient(90deg,rgba(110,45,170,0) 906px,rgba(128,58,192,0.12) 919px,rgba(150,75,215,0.25) 924px,rgba(196,118,250,0.40) 926.2px,rgba(200,124,252,0.40) 929.8px,rgba(150,75,215,0.25) 932px,rgba(128,58,192,0.12) 937px,rgba(110,45,170,0) 944px),linear-gradient(90deg,rgba(8,3,14,0) -3px,rgba(8,3,14,0.78) 20px,rgba(8,3,14,0.78) 64px,rgba(8,3,14,0) 87px),linear-gradient(90deg,rgba(8,3,14,0) 769px,rgba(8,3,14,0.6) 782px,rgba(8,3,14,0.6) 804px,rgba(8,3,14,0) 817px),linear-gradient(90deg,rgba(8,3,14,0) 287px,rgba(8,3,14,0.38) 310px,rgba(8,3,14,0.38) 354px,rgba(8,3,14,0) 377px),linear-gradient(90deg,rgba(8,3,14,0) 404px,rgba(8,3,14,0.3) 427px,rgba(8,3,14,0.3) 497px,rgba(8,3,14,0) 520px),linear-gradient(90deg,rgba(8,3,14,0) 537px,rgba(8,3,14,0.42) 560px,rgba(8,3,14,0.42) 640px,rgba(8,3,14,0) 663px),linear-gradient(90deg,rgba(8,3,14,0) 824px,rgba(8,3,14,0.5) 847px,rgba(8,3,14,0.5) 910px,rgba(8,3,14,0) 933px),#35134f"></div>
  <div class="abs" style="left:0;top:68px;width:957px;height:200px;filter:url(#jag);background:linear-gradient(90deg,rgba(205,135,255,0) 92.8px,rgba(205,135,255,0.85) 98.2px,rgba(205,135,255,0.85) 101.8px,rgba(205,135,255,0) 107.2px),linear-gradient(90deg,rgba(205,135,255,0) 233.8px,rgba(205,135,255,0.85) 239.2px,rgba(205,135,255,0.85) 242.8px,rgba(205,135,255,0) 248.2px),linear-gradient(90deg,rgba(205,135,255,0) 373.8px,rgba(205,135,255,0.85) 379.2px,rgba(205,135,255,0.85) 382.8px,rgba(205,135,255,0) 388.2px),linear-gradient(90deg,rgba(110,45,170,0) -5px,rgba(128,58,192,0.15) -6px,rgba(150,75,215,0.31) -3px,rgba(196,118,250,0.50) -0.4px,rgba(200,124,252,0.50) 2.4px,rgba(150,75,215,0.31) 5px,rgba(128,58,192,0.15) 8px,rgba(110,45,170,0) 13px),linear-gradient(90deg,rgba(110,45,170,0) 58px,rgba(128,58,192,0.30) 87px,rgba(150,75,215,0.62) 94px,rgba(196,118,250,1.00) 97.5px,rgba(200,124,252,1.00) 102.5px,rgba(150,75,215,0.62) 106px,rgba(128,58,192,0.30) 113px,rgba(110,45,170,0) 124px),linear-gradient(90deg,rgba(110,45,170,0) 203px,rgba(128,58,192,0.30) 228px,rgba(150,75,215,0.62) 235px,rgba(196,118,250,1.00) 238.6px,rgba(200,124,252,1.00) 243.4px,rgba(150,75,215,0.62) 247px,rgba(128,58,192,0.30) 254px,rgba(110,45,170,0) 265px),linear-gradient(90deg,rgba(110,45,170,0) 343px,rgba(128,58,192,0.30) 368px,rgba(150,75,215,0.62) 375px,rgba(196,118,250,1.00) 378.6px,rgba(200,124,252,1.00) 383.4px,rgba(150,75,215,0.62) 387px,rgba(128,58,192,0.30) 394px,rgba(110,45,170,0) 405px),linear-gradient(90deg,rgba(110,45,170,0) 898px,rgba(128,58,192,0.09) 905px,rgba(150,75,215,0.19) 910px,rgba(196,118,250,0.30) 912.2px,rgba(200,124,252,0.30) 915.8px,rgba(150,75,215,0.19) 918px,rgba(128,58,192,0.09) 923px,rgba(110,45,170,0) 926px),linear-gradient(90deg,rgba(110,45,170,0) 931px,rgba(128,58,192,0.21) 936px,rgba(150,75,215,0.43) 943px,rgba(196,118,250,0.70) 946.5px,rgba(200,124,252,0.70) 951.5px,rgba(150,75,215,0.43) 955px,rgba(128,58,192,0.21) 962px,rgba(110,45,170,0) 965px),linear-gradient(90deg,rgba(8,3,14,0) -9px,rgba(8,3,14,0.78) 14px,rgba(8,3,14,0.78) 50px,rgba(8,3,14,0) 73px),linear-gradient(90deg,rgba(8,3,14,0) 259px,rgba(8,3,14,0.4) 282px,rgba(8,3,14,0.4) 340px,rgba(8,3,14,0) 363px),linear-gradient(90deg,rgba(8,3,14,0) 877px,rgba(8,3,14,0.5) 887px,rgba(8,3,14,0.5) 901px,rgba(8,3,14,0) 911px),linear-gradient(90deg,rgba(8,3,14,0) 917px,rgba(8,3,14,0.4) 925px,rgba(8,3,14,0.4) 935px,rgba(8,3,14,0) 943px),#361451"></div>
  <div class="abs" style="left:0;top:268px;width:957px;height:175px;filter:url(#jag);background:linear-gradient(90deg,rgba(205,135,255,0) 286.8px,rgba(205,135,255,0.85) 292.2px,rgba(205,135,255,0.85) 295.8px,rgba(205,135,255,0) 301.2px),linear-gradient(90deg,rgba(110,45,170,0) 262px,rgba(128,58,192,0.30) 281px,rgba(150,75,215,0.62) 288px,rgba(196,118,250,1.00) 291.6px,rgba(200,124,252,1.00) 296.4px,rgba(150,75,215,0.62) 300px,rgba(128,58,192,0.30) 307px,rgba(110,45,170,0) 318px),linear-gradient(90deg,rgba(110,45,170,0) 339px,rgba(128,58,192,0.10) 351px,rgba(150,75,215,0.22) 360px,rgba(196,118,250,0.35) 365.5px,rgba(200,124,252,0.35) 372.5px,rgba(150,75,215,0.22) 378px,rgba(128,58,192,0.10) 387px,rgba(110,45,170,0) 395px),linear-gradient(90deg,rgba(110,45,170,0) 917px,rgba(128,58,192,0.07) 926px,rgba(150,75,215,0.15) 930px,rgba(196,118,250,0.25) 933.2px,rgba(200,124,252,0.25) 936.8px,rgba(150,75,215,0.15) 940px,rgba(128,58,192,0.07) 944px,rgba(110,45,170,0) 951px),linear-gradient(90deg,rgba(8,3,14,0) 307px,rgba(8,3,14,0.3) 317px,rgba(8,3,14,0.3) 343px,rgba(8,3,14,0) 353px),linear-gradient(90deg,rgba(8,3,14,0) 877px,rgba(8,3,14,0.3) 887px,rgba(8,3,14,0.3) 955px,rgba(8,3,14,0) 965px),linear-gradient(90deg,rgba(8,3,14,0) 241px,rgba(8,3,14,0.2) 249px,rgba(8,3,14,0.2) 263px,rgba(8,3,14,0) 271px),#33134c"></div>
  <svg class="abs" style="left:0;top:0" width="957" height="443"><filter id="jag" x="0" y="0" width="100%" height="100%"><feTurbulence type="fractalNoise" baseFrequency="0.004 0.850" numOctaves="2" seed="5" result="t"/><feColorMatrix in="t" type="matrix" values="2.400 0 0 0 -0.700  0 0 0 0 0.500  0 0 0 0 0.500  0 0 0 0 1" result="m"/><feDisplacementMap in="SourceGraphic" in2="m" scale="8" xChannelSelector="R" yChannelSelector="G"/></filter><filter id="nz" x="0" y="0" width="100%" height="100%"><feTurbulence type="fractalNoise" baseFrequency="0.950" numOctaves="2" seed="3"/><feColorMatrix type="matrix" values="0 0 0 0 0  0 0 0 0 0  0 0 0 0 0  2.400 0 0 0 -0.980"/></filter><filter id="nz2" x="0" y="0" width="100%" height="100%"><feTurbulence type="fractalNoise" baseFrequency="0.900" numOctaves="2" seed="11"/><feColorMatrix type="matrix" values="0 0 0 0 0.540  0 0 0 0 0.300  0 0 0 0 0.720  0 3 0 0 -1.700"/></filter><rect width="957" height="443" filter="url(#nz)" opacity=".75"/><rect width="957" height="443" filter="url(#nz2)" opacity=".7"/></svg>
  <div class="abs" style="left:813px;top:0;width:1.500px;height:68px;background:#f2f2f2"></div><div class="abs" style="left:799px;top:0;width:1px;height:68px;background:rgba(200,170,230,.45)"></div>
  <div class="abs" style="left:0;top:67px;width:957px;height:1px;background:rgba(150,100,190,.3)"></div>
  <svg class="abs" style="left:472px;top:14px" width="12" height="64"><path d="M2.500 0v62M5.500 0v62M8.500 0v62" stroke="#e6e0ee" stroke-width="1" stroke-dasharray="1.500 2.500" opacity=".85"/></svg>
  <div class="abs" style="left:0;top:267px;width:957px;height:1px;background:rgba(150,100,190,.2)"></div>
  <div class="abs" style="left:53px;top:0;width:1px;height:443px;background:rgba(150,100,190,.22)"></div>
  <div class="abs" style="left:142px;top:0;width:1px;height:443px;background:rgba(150,100,190,.22)"></div>
  <div class="abs" style="left:344px;top:0;width:1px;height:443px;background:rgba(150,100,190,.22)"></div>
</div>
<!-- bottom bar -->
<div class="abs" style="left:283px;top:987px;width:957px;height:13px;background:linear-gradient(#4c4c4c,#262626)"></div>
<div class="abs" style="left:283px;top:987px;width:957px;height:5px;background:repeating-linear-gradient(90deg,transparent 0,transparent 15px,#bbb 15px,#bbb 16px);opacity:.45"></div>
<div class="abs" style="left:283px;top:1000px;width:957px;height:14px;background:#000"></div>
<div class="t" style="left:530px;top:998.500px;color:#b0b0b0;font-size:12.5px;letter-spacing:-0.455px">4.000</div>
<div class="abs" style="left:634px;top:987px;width:2px;height:28px;background:#d8d8d8"></div>
<div class="abs" style="left:636px;top:988px;width:120px;height:26px;background:radial-gradient(ellipse 60px 14px at 40% 110%,#8c8a25 0,#5a5a35 60%,#4a4a42 100%)"></div>
<div class="abs" style="left:283px;top:1014px;width:957px;height:1px;background:#d8d8d8"></div>
<div class="abs" style="left:1167px;top:986px;width:73px;height:28px;background:linear-gradient(#4a4a4a,#1c1c1c)"></div>
<div class="t" style="left:1171px;top:993px;color:#e8e8e8;font-size:12px">x5</div>
<svg class="abs" style="left:1190px;top:988px" width="50" height="26" viewBox="0 0 50 26">
  <path d="M10.500 9l4 3.500-4 3.500z" fill="#ddd"/>
  <rect x="22.500" y="1.500" width="25" height="22" fill="#111" stroke="#777" stroke-width="1"/>
  <circle cx="35" cy="12.500" r="7" fill="none" stroke="#ededed" stroke-width="1.400"/>
  <path d="M31.500 9.500l3.500 3-3.500 3zM35.500 9.500l3.500 3-3.500 3z" fill="#ededed"/>
</svg>

<!-- RIGHT STRIP -->
<div class="abs" style="left:1240px;top:143px;width:40px;height:877px;background:#000"></div>
<div class="abs" style="left:1240px;top:143px;width:1px;height:877px;background:#777"></div>
<div class="abs" style="left:1241px;top:145px;width:37px;height:28px;background:linear-gradient(#4a4a4a 0,#333 46%,#050505 50%,#000 100%);border:1px solid #3c3c3c;border-bottom-color:#666;color:#f0f0f0;font-size:11.5px;text-align:center;line-height:27px;letter-spacing:-0.040px">Auto</div>
<div class="t" style="left:1240px;width:38px;text-align:center;top:221.0px;color:#b8b8b8;font-size:9px">-10</div>
<div class="t" style="left:1240px;width:38px;text-align:center;top:273.4px;color:#b8b8b8;font-size:9px">-20</div>
<div class="t" style="left:1240px;width:38px;text-align:center;top:325.8px;color:#b8b8b8;font-size:9px">-30</div>
<div class="t" style="left:1240px;width:38px;text-align:center;top:378.2px;color:#b8b8b8;font-size:9px">-40</div>
<div class="t" style="left:1240px;width:38px;text-align:center;top:430.6px;color:#b8b8b8;font-size:9px">-50</div>
<div class="t" style="left:1240px;width:38px;text-align:center;top:483.0px;color:#b8b8b8;font-size:9px">-60</div>
<div class="t" style="left:1240px;width:38px;text-align:center;top:535.4px;color:#b8b8b8;font-size:9px">-70</div>
<div class="t" style="left:1240px;width:38px;text-align:center;top:587.8px;color:#b8b8b8;font-size:9px">-80</div>
<div class="t" style="left:1240px;width:38px;text-align:center;top:692.6px;color:#b8b8b8;font-size:9px">-100</div>
<div class="abs" style="left:1240px;top:698px;width:6px;height:1px;background:#ccc"></div>
<div class="t" style="left:1240px;width:38px;text-align:center;top:745.0px;color:#b8b8b8;font-size:9px">-110</div>
<div class="abs" style="left:1240px;top:750px;width:6px;height:1px;background:#ccc"></div>
<div class="t" style="left:1240px;width:38px;text-align:center;top:797.4px;color:#b8b8b8;font-size:9px">-120</div>
<div class="abs" style="left:1240px;top:802px;width:6px;height:1px;background:#ccc"></div>
<div class="t" style="left:1240px;width:38px;text-align:center;top:849.8px;color:#b8b8b8;font-size:9px">-130</div>
<div class="abs" style="left:1240px;top:855px;width:6px;height:1px;background:#ccc"></div>
<div class="t" style="left:1240px;width:38px;text-align:center;top:902.2px;color:#b8b8b8;font-size:9px">-140</div>
<div class="abs" style="left:1240px;top:907px;width:6px;height:1px;background:#ccc"></div>
<div class="t" style="left:1240px;width:38px;text-align:center;top:954.6px;color:#b8b8b8;font-size:9px">-150</div>
<div class="abs" style="left:1240px;top:960px;width:6px;height:1px;background:#ccc"></div>

<div class="abs" style="left:1242px;top:609px;width:34px;height:83px;background:linear-gradient(#f5e8ff 0,#b06be8 2px,#9a52d6 18%,#5a2a86 55%,#1a0a28 90%,#000 100%);border-bottom:1px solid #ddd"></div>
<div class="abs" style="left:1245px;top:637px;width:28px;height:18px;border-radius:4px;background:#3b1f57;color:#d8c8ea;font-size:9px;text-align:center;line-height:18px">-90</div>

<!-- STATUS BAR -->
<div class="abs" style="left:0;top:1015px;width:1280px;height:7px;background:linear-gradient(#59616b,#3f454c)"></div>
<div class="abs" style="left:0;top:1022px;width:1280px;height:18px;background:#3b3b3b"></div>
<div class="t" style="left:9px;top:1021px;color:#e0e0e0;font-size:12px;letter-spacing:-0.637px">Ready</div>
<div class="t" style="left:805px;top:1020px;color:#cfcfcf;font-size:12px">Power: N/A</div>
<div class="abs" style="left:876px;top:1021px;width:68px;height:12px;border:1px solid #8a8a8a;background:#4a4a4a"></div>
<div class="t" style="left:962px;top:1020px;color:#cfcfcf;font-size:12px">CPU: 12%</div>
<div class="abs" style="left:1032px;top:1021px;width:68px;height:12px;border:1px solid #8a8a8a;background:linear-gradient(90deg,#7fb842 0,#7fb842 22%,#4a4a4a 22%)"></div>
<div class="t" style="left:1116px;top:1020px;color:#cfcfcf;font-size:12px">Audio: 0ms</div>
<div class="abs" style="left:1187px;top:1022px;width:69px;height:12px;border:2px solid #dfe8f2;border-radius:2px;background:#2a3642"></div>
<svg class="abs" style="left:1262px;top:1024px" width="16" height="16"><path d="M12 3v2M12 7v2M12 11v2M8 7v2M8 11v2M4 11v2" stroke="#aaa" stroke-width="2"/></svg>

<!-- CONVERTER DEFINITIONS DIALOG -->
<div class="dlg" id="conv" style="left:221px;top:66px;width:733px;height:494px;border:1px solid #f3e9fb;border-left:1px solid rgba(78,44,165,.8);border-top:0">
  <div class="abs" style="left:-1px;top:0;width:733px;height:31px;background:#661ff0"></div>
  <div class="t" style="left:9px;top:8px;color:#fff;font-size:12px;letter-spacing:-0.064px">Converter Definitions</div>
  <svg class="abs" style="left:710px;top:9px" width="12" height="12"><path d="M1 1l10 10M11 1l-10 10" stroke="#f0e8ff" stroke-width="1.200"/></svg>
  <!-- toolbar -->
  <div class="wbtn dis" style="left:14px;top:45px;width:42px;height:21px;line-height:19px;font-size:11px;letter-spacing:-0.391px">Add</div>
  <div class="wbtn dis" style="left:62px;top:45px;width:42px;height:21px;line-height:19px;font-size:11px;letter-spacing:-0.219px">Copy</div>
  <div class="wbtn dis" style="left:110px;top:45px;width:42px;height:21px;line-height:19px;font-size:11px;letter-spacing:-0.114px">Edit</div>
  <div class="wbtn dis" style="left:157px;top:45px;width:43px;height:21px;line-height:19px;font-size:11px;letter-spacing:-0.099px">Delete</div>
  <div class="wbtn dis" style="left:221px;top:45px;width:22px;height:21px;line-height:19px;font-size:10px">&#9650;</div>
  <div class="wbtn dis" style="left:248px;top:45px;width:22px;height:21px;line-height:19px;font-size:10px">&#9660;</div>
  <div class="lnk" style="left:295px;top:47px;font-size:11px;letter-spacing:-0.188px">QO-100</div>
  <!-- list -->
  <div class="lst" style="left:9px;top:77px;width:325px;height:124px">
    <div class="abs mono" style="left:0;top:0;width:323px;height:24px;background:linear-gradient(#fdfdfd,#ededed);border-bottom:1px solid #d5d5d5"></div>
    <div class="abs" style="left:97px;top:1px;width:1px;height:22px;background:#d0d0d0"></div>
    <div class="abs" style="left:149px;top:1px;width:1px;height:22px;background:#d0d0d0"></div>
    <div class="abs" style="left:200px;top:1px;width:1px;height:22px;background:#d0d0d0"></div>
    <div class="abs" style="left:288px;top:1px;width:1px;height:22px;background:#d0d0d0"></div>
    <div class="t mono" style="left:7px;top:7px;font-size:10px">Title</div>
    <div class="t mono" style="left:103px;top:7px;font-size:10px">Up/Dn</div>
    <div class="t mono" style="left:155px;top:7px;font-size:10px">RX/TX</div>
    <div class="t mono" style="right:40px;top:7px;font-size:10px">RX &Delta;</div>
    <div class="t mono" style="left:304px;top:7px;font-size:10px">TX</div>
    <div class="abs" style="left:6px;top:26px;width:317px;height:16px;background:#f0f0f0"></div>
    <div class="t mono" style="left:8px;top:29px;font-size:10px">LOW FREQUENCY</div>
    <div class="t mono" style="left:103px;top:29px;font-size:10px">Up</div>
    <div class="t mono" style="left:156px;top:29px;font-size:10px">RX</div>
    <div class="t mono" style="right:40px;top:29px;font-size:10px">125.000.000</div>
    <!-- h scrollbar -->
    <div class="abs" style="left:0;top:105px;width:323px;height:17px;background:#f0f0f0"></div>
    <div class="abs" style="left:19px;top:106px;width:257px;height:15px;background:#cdcdcd"></div>
    <svg class="abs" style="left:0;top:105px" width="323" height="17"><path d="M11.500 4.500l-4 4 4 4M311 4.500l4 4-4 4" stroke="#505050" stroke-width="1.600" fill="none"/></svg>
  </div>
  <!-- form -->
  <div class="t" style="left:12px;top:221px;font-size:11px;letter-spacing:-0.040px">Type:</div>
  <div class="t" style="left:69px;top:221px;font-size:11px;letter-spacing:-0.031px">Down-converter</div>
  <div class="t" style="left:174px;top:221px;font-size:11px;letter-spacing:0.035px">Up-converter</div>
  <div class="t" style="left:12px;top:245px;font-size:11px;letter-spacing:-0.575px">RX/TX:</div>
  <div class="t" style="left:69px;top:245px;font-size:11px;letter-spacing:-0.991px">RX</div>
  <div class="t" style="left:108px;top:245px;font-size:11px;letter-spacing:-0.779px">RX/TX</div>
  <svg class="abs" style="left:49px;top:220px" width="130" height="40" viewBox="0 0 130 40">
    <circle cx="11" cy="8" r="5.500" fill="#fff" stroke="#333" stroke-width="1"/>
    <circle cx="116" cy="8" r="5.500" fill="#fff" stroke="#333" stroke-width="1"/><circle cx="116" cy="8" r="3" fill="#222"/>
    <circle cx="11.500" cy="32" r="5.500" fill="#fff" stroke="#333" stroke-width="1"/><circle cx="11.500" cy="32" r="3" fill="#222"/>
    <circle cx="50" cy="32" r="5.500" fill="#fff" stroke="#333" stroke-width="1"/>
  </svg>
  <div class="t" style="left:12px;top:273px;font-size:11px;letter-spacing:-0.214px">Title</div>
  <div class="abs" style="left:54px;top:272px;width:120px;height:22px;background:#fff;border:1px solid #7a7a7a"></div>
  <div class="t mono" style="left:60px;top:276px;font-size:10px">LOW FREQUENCY</div>
  <div class="t" style="left:12px;top:302px;font-size:11px;letter-spacing:-0.879px">RX:</div>
  <div class="abs" style="left:54px;top:299px;width:120px;height:22px;background:#fff;border:1px solid #7a7a7a"></div>
  <div class="t mono" style="right:563px;top:303px;font-size:10px">___125.000.000</div>
  <div class="t" style="left:183px;top:303px;font-size:10px">&#9660;</div>
  <div class="t" style="left:12px;top:328px;font-size:11px;color:#a6a6a6;letter-spacing:-0.771px">TX:</div>
  <div class="abs" style="left:54px;top:325px;width:120px;height:22px;background:#f0f0f0;border:1px solid #d4d4d4"></div>
  <div class="t mono" style="right:563px;top:329px;font-size:10px;color:#9a9a9a">______.___.__0</div>
  <div class="t" style="left:183px;top:329px;font-size:10px;color:#a6a6a6">&#9650;</div>
  <div class="abs" style="left:18px;top:359px;width:197px;height:1px;background:#a0a0a0"></div>
  <div class="wbtn" style="left:13px;top:373px;width:58px;height:24px;line-height:22px;font-size:11px;letter-spacing:-0.163px">Apply</div>
  <div class="wbtn" style="left:76px;top:373px;width:58px;height:24px;line-height:22px;font-size:11px;letter-spacing:-0.406px">Cancel</div>
  <div class="wbtn" style="left:13px;top:458px;width:73px;height:24px;line-height:22px;font-size:11px;letter-spacing:-0.268px">Save</div>
  <div class="wbtn" style="left:94px;top:458px;width:73px;height:24px;line-height:22px;font-size:11px;letter-spacing:-0.406px">Cancel</div>
  <!-- help panel -->
  <div class="abs" id="help" style="left:357px;top:44px;width:360px;height:438px;background:#fdfdfd;border:1px solid #828790;border-right:0;border-bottom:0;overflow:hidden">
    <div class="abs" style="left:343px;top:0;width:16px;height:437px;background:#f0f0f0"></div>
    <div class="abs" style="left:344px;top:17px;width:15px;height:219px;background:#cdcdcd"></div>
    <svg class="abs" style="left:343px;top:0" width="16" height="437"><path d="M4 11.500l4-4 4 4M4 425l4 4 4-4" stroke="#505050" stroke-width="1.600" fill="none"/></svg>
    <div class="hp" style="top:9px;letter-spacing:0.298px">Use this window to define down-converter and up-</div>
    <div class="hp" style="top:29px;letter-spacing:0.323px">converter offsets.</div>
    <div class="hp" style="top:62px;letter-spacing:0.204px">If only a receive definition then select RX,</div>
    <div class="hp" style="top:82px;letter-spacing:0.218px">otherwise select RX/TX for a transceiver definition,</div>
    <div class="hp" style="top:102px;letter-spacing:0.111px">for example support for QO-100 with PlutoSDR.</div>
    <div class="hp b" style="top:155px;letter-spacing:-0.275px">Down-converter Example</div>
    <div class="hp g" style="top:190px;letter-spacing:-0.231px">144MHz transverter<svg style="position:absolute;left:124.5px;top:5px" width="13" height="10" viewBox="0 0 13 10"><path d="M0 4h6.500v-3.500l6 4.500-6 4.500v-3.500h-6.500z" fill="#555"/></svg><span style="position:absolute;left:141px;letter-spacing:-1.658px;word-spacing:2px">HF SDR</span></div>
    <div class="hp" style="top:211px;letter-spacing:-0.114px">Receives signals in the range 144 to 146 MHz and</div>
    <div class="hp" style="top:231px;letter-spacing:0.020px">outputs the same signals in the range 28 to 30 MHz,</div>
    <div class="hp" style="top:251px;letter-spacing:0.105px">that is 116 MHz lower.</div>
    <div class="hp b" style="top:304px;letter-spacing:-0.260px">Up-converter Example</div>
    <div class="hp g" style="top:339px;letter-spacing:-0.376px">HF upconverter<svg style="position:absolute;left:98.5px;top:5px" width="13" height="10" viewBox="0 0 13 10"><path d="M0 4h6.500v-3.500l6 4.500-6 4.500v-3.500h-6.500z" fill="#555"/></svg><span style="position:absolute;left:114.500px;letter-spacing:-1.322px;word-spacing:2px">VHF SDR</span></div>
    <div class="hp" style="top:360px;letter-spacing:-0.099px">Receives signals in the range 1 to 30 MHz and</div>
    <div class="hp" style="top:380px;letter-spacing:0.030px">outputs these same signals in the range 151 to 180</div>
    <div class="hp" style="top:400px;letter-spacing:-0.040px">MHz, that is 150 MHz higher.</div>
  </div>
</div>

<!-- SELECT RADIO DIALOG -->
<div class="dlg" id="selr" style="left:9px;top:681px;width:521px;height:344px;box-shadow:0 0 0 1px rgba(120,100,150,.55)">
  <div class="abs" style="left:0;top:0;width:521px;height:30px;background:#c4b2df"></div>
  <svg class="abs" style="left:9px;top:7px" width="16" height="14"><rect x=".5" y=".5" width="14" height="12" fill="#e8e8e8" stroke="#9a9a9a"/><rect x="2" y="3" width="5" height="8" fill="#2f8f80"/><rect x="8" y="3" width="5" height="8" fill="#fff"/></svg>
  <div class="t" style="left:29px;top:8px;color:#7c7688;font-size:12px;letter-spacing:-0.495px;word-spacing:1.4px">Select Radio</div>
  <svg class="abs" style="left:501px;top:9px" width="12" height="12"><path d="M.5 .5l10 10M10.500 .5l-10 10" stroke="#6a6a6a" stroke-width="1"/></svg>
  <!-- tabs -->
  <div class="abs" style="left:0;top:30px;width:63px;height:25px;background:#fff"></div>
  <div class="abs" style="left:63px;top:32px;width:59px;height:22px;background:#f0f0f0;border:1px solid #d9d9d9"></div>
  <div class="abs" style="left:121px;top:32px;width:84px;height:22px;background:#f0f0f0;border:1px solid #d9d9d9"></div>
  <div class="t" style="left:16px;top:31px;font-weight:bold;font-size:14px;letter-spacing:-0.498px">All</div>
  <div class="t" style="left:76px;top:33px;font-weight:bold;font-size:13.5px;letter-spacing:-0.792px">Local</div>
  <div class="t" style="left:154px;top:33px;font-weight:bold;font-size:13.5px;letter-spacing:-0.556px">Server</div>
  <svg class="abs" style="left:136px;top:36px" width="14" height="12"><rect x="4.500" y=".5" width="4" height="3.500" fill="#555"/><path d="M6.500 4v3M2 9.500v-2.500h9v2.500" stroke="#555" fill="none"/><rect x="0" y="8" width="4" height="3" fill="#555"/><rect x="9" y="8" width="4" height="3" fill="#555"/></svg>
  <!-- list -->
  <div class="lst" style="left:6px;top:58px;width:507px;height:145px">
    <div class="abs" style="left:0;top:0;width:505px;height:24px;background:linear-gradient(#fdfdfd,#ececec);border-bottom:1px solid #d5d5d5"></div>
    <div class="abs" style="left:139px;top:1px;width:1px;height:22px;background:#cfcfcf"></div>
    <div class="abs" style="left:278px;top:1px;width:1px;height:22px;background:#cfcfcf"></div>
    <div class="abs" style="left:369px;top:1px;width:1px;height:22px;background:#cfcfcf"></div>
    <div class="abs" style="left:439px;top:1px;width:1px;height:22px;background:#cfcfcf"></div>
    <div class="t" style="left:6px;top:6px;font-size:11px;letter-spacing:-0.510px">Name</div>
    <div class="t" style="left:145px;top:6px;font-size:11px;letter-spacing:-0.432px">Model</div>
    <div class="t" style="left:284px;top:6px;font-size:11px;letter-spacing:-0.274px">Frequency</div>
    <div class="t" style="left:375px;top:6px;font-size:11px;letter-spacing:-0.571px">Serial</div>
    <div class="t" style="left:445px;top:6px;font-size:11px;letter-spacing:-0.451px">Address</div>
    <div class="abs" style="left:2px;top:26px;width:503px;height:16px;background:#f0f0f0"></div>
    <div class="t" style="left:6px;top:28px;font-size:11px;letter-spacing:-0.666px;word-spacing:1.4px">RTL Dongle USB - R820T</div>
    <div class="t" style="left:145px;top:28px;font-size:11px;letter-spacing:-0.666px;word-spacing:1.4px">RTL Dongle USB - R820T</div>
    <div class="t" style="left:285px;top:28px;font-size:11px;letter-spacing:-0.680px;word-spacing:1.4px">50 - 2000 MHz</div>
    <div class="t" style="left:375px;top:28px;font-size:11px;letter-spacing:-0.142px">00000001</div>
    <div class="t" style="left:445px;top:28px;font-size:11px;letter-spacing:-.3px;width:60px;overflow:hidden">Realtek::RTL</div>
    <div class="abs" style="left:0;top:126px;width:505px;height:17px;background:#f0f0f0"></div>
    <div class="abs" style="left:18px;top:127px;width:216px;height:15px;background:#cdcdcd"></div>
    <svg class="abs" style="left:0;top:126px" width="505" height="17"><path d="M11.500 4.500l-4 4 4 4M493 4.500l4 4-4 4" stroke="#505050" stroke-width="1.600" fill="none"/></svg>
  </div>
  <div class="t" style="left:5px;top:228px;font-size:11px;letter-spacing:0.115px">Converter:</div>
  <div class="abs" style="left:80px;top:225px;width:165px;height:21px;background:#e4e4e4;border:1px solid #adadad"></div>
  <div class="t" style="left:84px;top:229px;font-size:11px;letter-spacing:-1.044px;word-spacing:1.4px">LOW FREQUENCY</div>
  <div class="t" style="left:5px;top:257px;font-size:11px;letter-spacing:-0.012px">Bandwidth:</div>
  <div class="abs" style="left:80px;top:254px;width:106px;height:21px;background:#e4e4e4;border:1px solid #adadad"></div>
  <div class="t" style="left:84px;top:258px;font-size:11px;letter-spacing:-1.076px;word-spacing:1.4px">2 MHz</div>
  <svg class="abs" style="left:170px;top:225px" width="80" height="50"><path d="M62.500 8.500l4 4 4-4M2.500 37.500l4 4 4-4" stroke="#444" stroke-width="1.200" fill="none"/></svg>
  <div class="abs" style="left:8px;top:293px;width:504px;height:1px;background:#a0a0a0"></div>
  <div class="wbtn" style="left:7px;top:311px;width:88px;height:24px;line-height:22px;padding-left:18px;font-size:11px;letter-spacing:-0.526px">Start</div>
  <svg class="abs" style="left:15px;top:316px" width="14" height="14"><path d="M2 1l10 6-10 6z" fill="#3b74d8" stroke="#1d4aa0" stroke-width=".8"/></svg>
  <div class="wbtn" style="left:415px;top:311px;width:91px;height:24px;line-height:22px;font-size:11px;letter-spacing:0.048px">Definitions...</div>
</div>

<!-- RADIO DEFINITIONS DIALOG -->
<div class="dlg" id="radd" style="left:670px;top:623px;width:497px;height:406px;box-shadow:0 0 0 1px rgba(120,100,150,.55)">
  <div class="abs" style="left:0;top:0;width:497px;height:30px;background:#c4b2df"></div>
  <svg class="abs" style="left:8px;top:7px" width="16" height="14"><rect x=".5" y=".5" width="14" height="12" fill="#e8e8e8" stroke="#9a9a9a"/><rect x="2" y="3" width="5" height="8" fill="#2f8f80"/><rect x="8" y="3" width="5" height="8" fill="#fff"/></svg>
  <div class="t" style="left:29px;top:8px;color:#7c7688;font-size:12px;letter-spacing:-0.042px">Radio Definitions</div>
  <svg class="abs" style="left:476px;top:9px" width="12" height="12"><path d="M.5 .5l10 10M10.500 .5l-10 10" stroke="#6a6a6a" stroke-width="1"/></svg>
  <div class="wbtn" style="left:8px;top:38px;width:93px;height:24px;line-height:22px;padding-left:2px;font-size:11px;letter-spacing:-0.309px">Search</div>
  <svg class="abs" style="left:11px;top:41px" width="88" height="18"><circle cx="7.500" cy="7" r="5" fill="#eaf2fa" stroke="#777" stroke-width="1.300"/><path d="M11 10.500l5 5" stroke="#777" stroke-width="2"/><path d="M75 8h8l-4 4.500z" fill="#444"/></svg>
  <div class="wbtn" style="left:128px;top:38px;width:57px;height:24px;line-height:22px;font-size:11px;letter-spacing:-0.391px">Add</div>
  <div class="wbtn" style="left:188px;top:38px;width:57px;height:24px;line-height:22px;font-size:11px;letter-spacing:-0.114px">Edit</div>
  <div class="wbtn" style="left:248px;top:38px;width:57px;height:24px;line-height:22px;font-size:11px;letter-spacing:-0.099px">Delete</div>
  <div class="lnk" style="left:432px;top:43px;font-size:11px;letter-spacing:0.180px">Text viewer</div>
  <div class="lst" style="left:4px;top:68px;width:491px;height:180px">
    <div class="abs" style="left:0;top:0;width:489px;height:26px;background:linear-gradient(#fdfdfd,#ececec);border-bottom:1px solid #d5d5d5"></div>
    <div class="abs" style="left:54px;top:1px;width:1px;height:24px;background:#cfcfcf"></div>
    <div class="abs" style="left:193px;top:1px;width:1px;height:24px;background:#cfcfcf"></div>
    <div class="abs" style="left:331px;top:1px;width:1px;height:24px;background:#cfcfcf"></div>
    <div class="abs" style="left:423px;top:1px;width:1px;height:24px;background:#cfcfcf"></div>
    <div class="t" style="left:5px;top:8px;font-size:11px;letter-spacing:-0.292px">Enable</div>
    <div class="t" style="left:59px;top:8px;font-size:11px;letter-spacing:-0.510px">Name</div>
    <div class="t" style="left:198px;top:8px;font-size:11px;letter-spacing:-0.432px">Model</div>
    <div class="t" style="left:337px;top:8px;font-size:11px;letter-spacing:-0.274px">Frequency</div>
    <div class="t" style="left:428px;top:8px;font-size:11px;letter-spacing:-0.571px">Serial</div>
    <div class="abs" style="left:20px;top:28px;width:469px;height:16px;background:#f0f0f0"></div>
    <svg class="abs" style="left:6px;top:28px" width="14" height="14"><rect x=".5" y=".5" width="12" height="12" fill="#fff" stroke="#333"/><path d="M3 6.500l2.500 2.500 5-5.500" stroke="#222" stroke-width="1.300" fill="none"/></svg>
    <div class="t" style="left:59px;top:29px;font-size:11px;letter-spacing:-0.666px;word-spacing:1.4px">RTL Dongle USB - R820T</div>
    <div class="t" style="left:198px;top:29px;font-size:11px;letter-spacing:-0.666px;word-spacing:1.4px">RTL Dongle USB - R820T</div>
    <div class="t" style="left:338px;top:29px;font-size:11px;letter-spacing:-0.680px;word-spacing:1.4px">50 - 2000 MHz</div>
    <div class="t" style="left:428px;top:29px;font-size:11px;letter-spacing:-0.142px">00000001</div>
    <div class="abs" style="left:0;top:161px;width:489px;height:17px;background:#f0f0f0"></div>
    <div class="abs" style="left:18px;top:162px;width:179px;height:15px;background:#cdcdcd"></div>
    <svg class="abs" style="left:0;top:161px" width="489" height="17"><path d="M11.500 4.500l-4 4 4 4M477 4.500l4 4-4 4" stroke="#505050" stroke-width="1.600" fill="none"/></svg>
  </div>
  <div class="abs" style="left:13px;top:274px;width:197px;height:76px;border:1px solid #dcdcdc"></div>
  <div class="t" style="left:18px;top:267px;font-size:11px;background:#f0f0f0;padding:0 2px;letter-spacing:-0.084px">Show these options</div>
  <svg class="abs" style="left:27px;top:295px" width="14" height="40"><rect x=".5" y=".5" width="12" height="12" fill="#fff" stroke="#333"/><path d="M3 6.500l2.500 2.500 5-5.500" stroke="#222" stroke-width="1.300" fill="none"/><rect x=".5" y="26" width="12" height="12" fill="#fff" stroke="#333"/></svg>
  <div class="t" style="left:42px;top:294px;font-size:11px;letter-spacing:-0.067px">Converter selection</div>
  <div class="t" style="left:42px;top:320px;font-size:11px;letter-spacing:0.080px">Invert spectrum</div>
  <div class="wbtn" style="left:150px;top:293px;width:47px;height:18px;line-height:16px;font-size:11px;letter-spacing:-0.114px">Edit</div>
  <div class="lnk" style="left:251px;top:290px;font-size:11px;letter-spacing:0.115px">Autostart options</div>
  <div class="lnk" style="left:251px;top:316px;font-size:11px;letter-spacing:-0.195px">Online help</div>
  <div class="wbtn" style="left:13px;top:372px;width:88px;height:24px;line-height:22px;font-size:11px;letter-spacing:-0.268px">Save</div>
  <div class="wbtn" style="left:106px;top:372px;width:88px;height:24px;line-height:22px;font-size:11px;letter-spacing:-0.406px">Cancel</div>
</div>

<!-- RED ANNOTATIONS -->
<svg class="abs" id="anno" style="left:0;top:0;pointer-events:none" width="1280" height="1040" viewBox="0 0 1280 1040" fill="none" stroke="#de1f2c" stroke-width="3" stroke-linecap="round" stroke-linejoin="round">
  <path d="M283.5 90.1C280.6 90.3 271.8 90.8 266.0 91.5C260.2 92.2 253.6 92.7 248.8 94.4C244.0 96.2 240.2 99.3 237.3 102.0C234.4 104.7 232.9 107.1 231.5 110.8C230.1 114.5 228.3 119.9 229.1 124.2C229.9 128.5 232.2 133.5 236.3 136.7C240.4 139.9 248.8 142.7 253.7 143.5C258.6 144.3 262.3 143.4 266.0 141.5C269.7 139.6 273.5 136.0 275.8 132.0C278.1 128.0 279.7 121.7 280.0 117.5C280.3 113.3 279.0 110.2 277.7 107.0C276.4 103.8 273.8 100.7 272.0 98.3C270.2 95.9 267.8 93.5 267.0 92.5"/>
  <path d="M298.8 63.2C300.7 63.8 306.3 65.5 310.0 66.5C313.7 67.5 320.5 68.4 321.0 69.4C321.5 70.4 315.4 71.5 313.0 72.5C310.6 73.5 306.0 74.1 306.5 75.7C307.0 77.3 313.1 79.8 316.0 82.0C318.9 84.2 322.8 86.8 323.8 88.6C324.8 90.4 323.0 91.5 322.0 93.0C321.0 94.5 320.2 95.8 318.0 97.3C315.8 98.8 310.1 101.2 308.5 102.0"/>
  <path d="M465.0 262.5C467.2 263.2 473.3 264.4 478.0 267.0C482.7 269.6 491.7 277.3 493.0 278.0C494.3 278.7 488.9 272.7 486.0 271.0C483.1 269.3 483.0 268.7 475.3 267.8C467.6 266.9 451.9 265.8 440.0 265.5C428.1 265.2 419.4 265.4 404.0 266.3C388.6 267.2 363.5 268.6 347.7 270.8C331.9 273.0 320.9 275.2 309.0 279.7C297.1 284.1 284.6 290.1 276.4 297.5C268.2 304.9 263.5 315.1 260.0 324.0C256.5 332.9 254.3 341.6 255.6 351.0C256.9 360.4 262.1 370.7 267.5 380.6C272.9 390.5 279.9 401.4 288.3 410.3C296.7 419.2 307.1 428.3 318.0 434.0C328.9 439.7 340.3 443.5 353.6 444.5C366.9 445.5 383.6 442.8 398.0 440.0C412.4 437.2 427.3 433.9 439.7 428.0C452.1 422.1 463.0 414.3 472.4 404.4C481.8 394.5 490.3 380.7 496.0 368.8C501.7 356.9 505.2 343.9 506.5 333.0C507.8 322.1 505.8 312.6 503.5 303.4C501.2 294.2 496.2 283.6 493.0 278.0C489.8 272.4 487.2 272.1 484.0 270.0C480.8 267.9 475.7 266.2 474.0 265.5"/>
  <path d="M531.8 336.0C531.8 337.7 531.8 343.0 532.0 346.0C532.2 349.0 532.0 351.7 533.0 354.0C534.0 356.3 535.7 358.5 538.0 360.0C540.3 361.5 541.9 362.3 546.6 362.8C551.3 363.3 562.8 362.8 566.0 362.8"/>
  <path d="M564.4 336.0C564.7 338.7 565.5 346.5 566.0 352.0C566.5 357.5 567.0 362.8 567.4 368.8C567.8 374.8 568.0 382.1 568.2 388.0C568.5 393.9 568.0 401.6 568.9 404.4C569.8 407.2 572.6 404.9 573.3 405.0"/>
  <path d="M138.8 894.5C135.7 894.6 125.6 893.7 120.0 895.0C114.4 896.3 107.7 902.5 105.0 902.5C102.3 902.5 103.8 897.1 104.0 895.0C104.2 892.9 103.3 892.3 106.0 890.0C108.7 887.7 111.0 882.6 120.0 881.0C129.0 879.4 150.0 879.4 160.0 880.5C170.0 881.6 173.3 886.8 180.0 887.5C186.7 888.2 191.7 886.5 200.0 885.0C208.3 883.5 219.2 879.7 230.0 878.8C240.8 877.9 255.0 878.3 265.0 879.5C275.0 880.7 283.7 883.2 290.0 886.0C296.3 888.8 302.2 892.0 303.0 896.0C303.8 900.0 299.7 906.0 295.0 910.0C290.3 914.0 285.0 917.3 275.0 920.0C265.0 922.7 247.5 924.3 235.0 926.0C222.5 927.7 209.6 928.6 200.0 930.0C190.4 931.4 187.1 934.3 177.5 934.5C167.9 934.7 154.6 931.6 142.5 931.0C130.4 930.4 114.2 932.0 105.0 931.0C95.8 930.0 91.5 927.9 87.5 925.0C83.5 922.1 80.2 916.9 81.0 913.7C81.8 910.5 88.5 907.9 92.5 906.0C96.5 904.1 102.9 903.1 105.0 902.5"/>
  <path d="M348.7 813.0C346.9 813.0 341.9 812.9 338.0 812.8C334.1 812.7 328.7 813.0 325.0 812.5C321.3 812.0 318.7 810.8 316.0 810.0C313.3 809.2 309.9 807.9 308.7 807.5"/>
  <path d="M308.7 807.5C308.5 810.4 307.9 819.2 307.5 825.0C307.1 830.8 304.9 840.0 306.0 842.5C307.1 845.0 311.2 840.6 314.0 840.0C316.8 839.4 319.8 838.5 322.5 838.7C325.2 838.9 327.9 839.8 330.0 841.0C332.1 842.2 333.8 844.0 335.0 846.0C336.2 848.0 336.8 850.7 337.0 853.0C337.2 855.3 336.7 857.8 336.0 860.0C335.3 862.2 334.4 864.5 333.0 866.0C331.6 867.5 329.8 868.5 327.5 868.7C325.2 868.9 321.5 867.8 319.0 867.0C316.5 866.2 313.6 864.2 312.5 863.7"/>
  <path d="M469.2 918.7C468.9 919.8 467.8 923.0 467.5 925.0C467.2 927.0 467.4 928.8 467.7 931.0C467.9 933.2 468.4 936.1 469.0 938.5C469.6 940.9 470.7 943.3 471.6 945.3C472.5 947.3 473.5 948.9 474.5 950.5C475.5 952.1 476.7 954.1 477.8 954.7C478.9 955.3 480.5 954.1 481.0 954.0"/>
  <path d="M452.0 967.2C454.5 967.8 461.8 970.0 466.9 971.0C472.0 972.0 477.8 972.3 482.5 973.4C487.2 974.5 492.9 977.1 495.0 977.8"/>
  <path d="M451.2 963.3C448.1 963.7 438.8 964.4 432.5 965.6C426.2 966.8 419.4 967.9 413.7 970.3C407.9 972.6 402.2 975.3 398.0 979.7C393.8 984.1 391.0 992.0 388.7 996.9C386.4 1001.8 383.7 1005.8 384.0 1009.4C384.3 1013.0 384.8 1016.6 390.3 1018.7C395.8 1020.8 407.3 1020.5 416.9 1021.9C426.5 1023.3 437.6 1026.1 448.0 1027.3C458.4 1028.5 469.0 1028.6 479.4 1028.9C489.8 1029.2 501.5 1029.2 510.6 1028.9C519.7 1028.6 528.0 1028.7 534.0 1027.3C540.0 1025.9 543.5 1023.5 546.5 1020.3C549.5 1017.0 551.8 1012.2 552.0 1007.8C552.2 1003.4 550.7 997.6 548.0 993.7C545.3 989.8 541.8 987.2 535.6 984.4C529.4 981.5 518.4 978.8 510.6 976.6C502.8 974.4 496.0 973.0 488.7 971.0C481.4 969.0 473.1 966.1 466.9 964.8C460.6 963.5 453.8 963.5 451.2 963.3"/>
  <path d="M819.2 818.0C821.2 818.0 827.2 817.7 831.0 818.0C834.8 818.3 838.3 817.7 842.1 819.6C845.9 821.5 850.6 825.0 853.6 829.4C856.6 833.8 858.8 840.6 860.0 845.8C861.2 851.0 861.5 855.9 861.0 860.5C860.5 865.1 858.8 870.2 856.8 873.6C854.8 877.0 852.2 880.1 848.7 880.9C845.2 881.7 839.4 880.3 835.6 878.5C831.8 876.7 827.2 873.2 825.8 870.3C824.4 867.4 826.0 862.9 827.4 861.3C828.8 859.7 830.5 859.0 834.0 860.5C837.5 862.0 843.8 867.3 848.7 870.3C853.6 873.3 859.3 875.0 863.4 878.5C867.5 882.0 870.1 888.2 873.2 891.5C876.3 894.8 880.5 898.0 882.2 898.0C883.9 898.0 883.1 892.6 883.3 891.5"/>
  <path d="M868.3 904.6C866.1 904.5 860.7 903.5 855.2 903.8C849.8 904.1 842.7 904.7 835.6 906.2C828.5 907.7 819.0 910.9 812.7 912.8C806.4 914.7 799.6 915.2 798.0 917.7C796.4 920.2 799.1 923.7 802.9 927.5C806.7 931.3 814.4 936.6 820.9 940.6C827.4 944.6 836.1 949.0 842.1 951.2C848.1 953.4 851.3 953.5 856.8 953.6C862.2 953.7 869.6 953.4 874.8 952.0C880.0 950.6 884.4 948.2 887.9 945.5C891.4 942.8 895.2 939.2 896.0 935.7C896.8 932.2 895.0 928.0 892.8 924.2C890.6 920.4 886.5 915.9 883.0 912.8C879.5 909.7 875.7 906.9 871.5 905.4C867.3 903.9 860.2 903.8 858.0 903.5"/>
  <path d="M408.500 275v16.500l3.800-3.600 3 6.800 2.600-1.200-3-6.600h5.200z" fill="#fff" stroke="#111" stroke-width="1"/>
</svg>

</div>
</body>
</html>
